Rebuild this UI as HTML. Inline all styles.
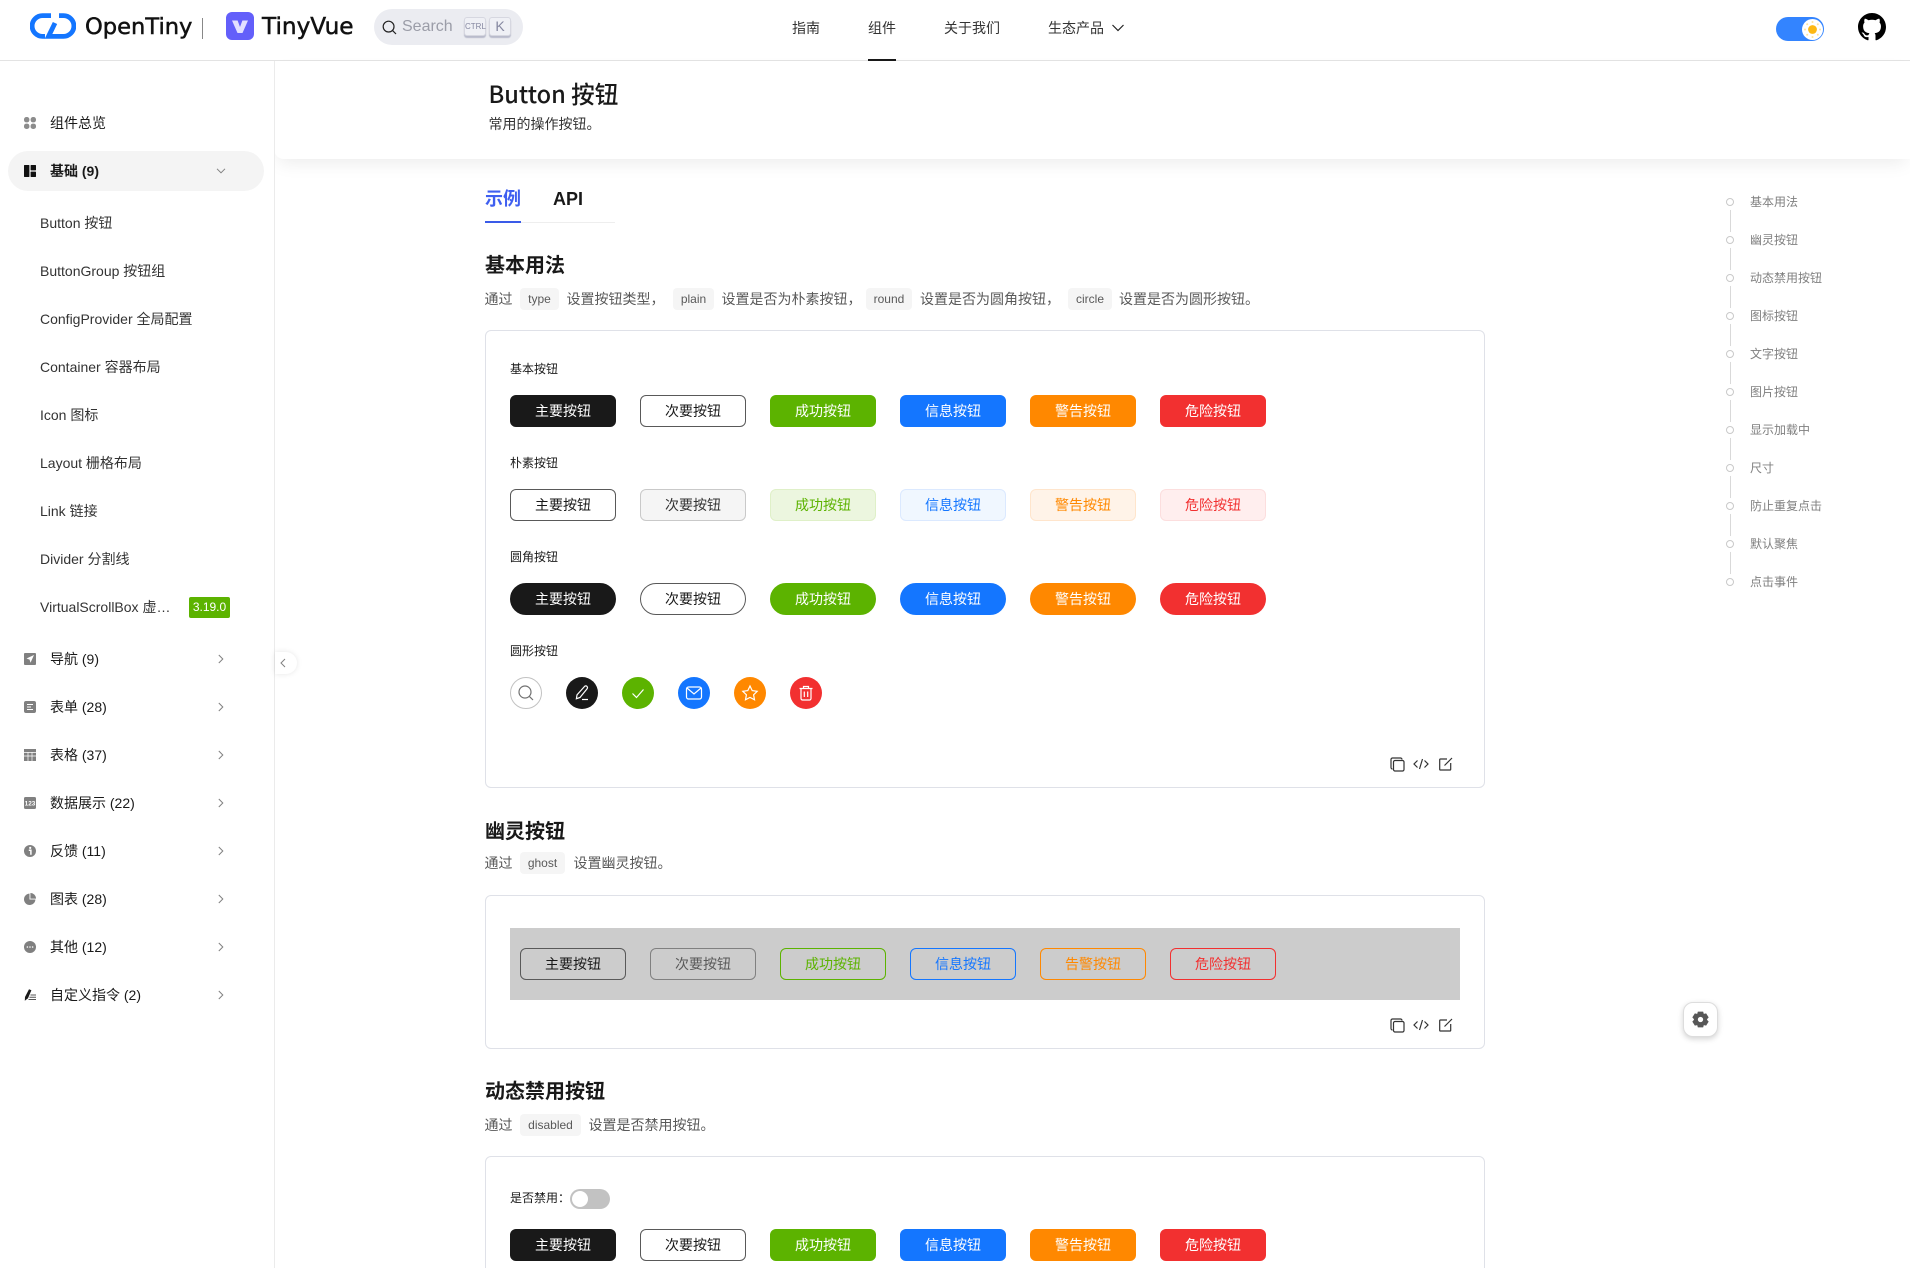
<!DOCTYPE html>
<html lang="zh-CN"><head><meta charset="utf-8"><title>Button 按钮</title>
<style>
html,body{margin:0;padding:0;background:#fff}
#p{position:relative;width:1910px;height:1268px;overflow:hidden;background:#fff;font-family:"Liberation Sans","Noto Sans CJK SC",sans-serif;font-size:14px;color:#191919}
.a,.t,svg.a{position:absolute}
.t{line-height:20px;height:20px;white-space:nowrap}
.n{left:50px;color:#191919}
.s{left:40px;color:#333}
.ch{position:absolute;left:218px;width:6px;height:10px}
.ic{position:absolute;left:24px;width:12px;height:12px}
.h2{position:absolute;left:485px;font-weight:bold;font-size:20px;line-height:28px;height:28px;white-space:nowrap}
.d{color:#595959;top:0}
.c{position:absolute;height:22px;line-height:22px;background:#f5f5f5;border-radius:4px;font-size:12px;color:#595959;text-align:center}
.card{position:absolute;left:485px;width:1000px;box-sizing:border-box;border:1px solid #dfe1e8;border-radius:6px}
.l{font-size:12px;color:#191919;left:510px}
.row{position:absolute;left:510px;display:flex;gap:24px}
.b{box-sizing:border-box;width:106px;height:32px;line-height:30px;border-radius:6px;border:1px solid;text-align:center;font-size:14px}
.p{background:#191919;border-color:#191919;color:#fff}
.o{background:#fff;border-color:#595959;color:#191919}
.g{background:#5cb300;border-color:#5cb300;color:#fff}
.i{background:#1476ff;border-color:#1476ff;color:#fff}
.w{background:#ff8800;border-color:#ff8800;color:#fff}
.x{background:#f23030;border-color:#f23030;color:#fff}
.r .b{border-radius:16px}
.circ{position:absolute;top:677px;width:32px;height:32px;border-radius:50%;box-sizing:border-box}
.circ svg{position:absolute;left:7px;top:7px;width:18px;height:18px;fill:none;stroke:#fff;stroke-width:1.2}
.tool{position:absolute;fill:none;stroke:#333;stroke-width:1.2}
.toc{font-size:12px;color:#808080;left:1750px}
.dot{position:absolute;left:1726px;width:8px;height:8px;box-sizing:border-box;border:1px solid #c9c9c9;border-radius:50%;background:#fff;box-shadow:0 0 0 4px #fff}
</style></head><body><div id="p">

<!-- header -->
<div class="a" style="left:0;top:60px;width:1910px;height:1px;background:#e3e3e3"></div>
<svg class="a" style="left:30px;top:13px" width="46" height="26" viewBox="0 0 46 26" fill="none" stroke="#1476ff" stroke-width="4.8"><path d="M21 2.600H12.500A10.400 10.400 0 0 0 12.500 23.400H15"/><path d="M29 2.600H33.500A10.400 10.400 0 0 1 33.500 23.400H18.500L25 10"/></svg>
<div class="t" style="left:85px;top:11px;height:32px;line-height:32px;font-family:'DejaVu Sans',sans-serif;font-size:22.6px;color:#111;-webkit-text-stroke:.5px #111">OpenTiny</div>
<div class="a" style="left:202px;top:18px;width:1px;height:21px;background:#888"></div>
<svg class="a" style="left:226px;top:12px" width="28" height="28" viewBox="0 0 28 28"><rect width="28" height="28" rx="6" fill="#635ffa"/><path d="M6 8.500h5.600L14 15l2.400-6.500H22L16.500 21h-5z" fill="#e2e0ff"/></svg>
<div class="t" style="left:262px;top:11px;height:32px;line-height:32px;font-family:'DejaVu Sans',sans-serif;font-size:23.2px;color:#111;-webkit-text-stroke:.5px #111">TinyVue</div>

<div class="a" style="left:374px;top:9px;width:149px;height:36px;border-radius:18px;background:#ebecf1"></div>
<svg class="a" style="left:382px;top:20px" width="15" height="15" viewBox="0 0 15 15" fill="none" stroke="#222" stroke-width="1.2"><circle cx="6.600" cy="6.600" r="5.400"/><path d="M10.600 10.600l3.400 3.400"/></svg>
<div class="t" style="left:402px;top:17px;font-size:16px;color:#9b9da8">Search</div>
<div class="a" style="left:464px;top:17px;width:22px;height:19px;box-sizing:border-box;border:1px solid #d6d7e0;border-radius:3px;background:#eff0f5;box-shadow:0 2px 1px #b9bbcb;font-size:8px;line-height:17px;text-align:center;color:#8587a0">CTRL</div>
<div class="a" style="left:489px;top:17px;width:22px;height:19px;box-sizing:border-box;border:1px solid #d6d7e0;border-radius:3px;background:#eff0f5;box-shadow:0 2px 1px #b9bbcb;font-size:14px;line-height:17px;text-align:center;color:#8587a0">K</div>

<div class="t" style="left:792px;top:18px;color:#333">指南</div>
<div class="t" style="left:868px;top:18px;color:#333">组件</div>
<div class="a" style="left:868px;top:59px;width:28px;height:2px;background:#191919"></div>
<div class="t" style="left:944px;top:18px;color:#333">关于我们</div>
<div class="t" style="left:1048px;top:18px;color:#333">生态产品</div>
<svg class="a" style="left:1111px;top:23px" width="14" height="10" viewBox="0 0 14 10" fill="none" stroke="#222" stroke-width="1.2"><path d="M1.500 2L7 7.500 12.500 2"/></svg>

<div class="a" style="left:1776px;top:17px;width:48px;height:24px;border-radius:12px;background:#3384ff"></div>
<div class="a" style="left:1802px;top:19px;width:21px;height:21px;border-radius:50%;background:#fff"></div>
<svg class="a" style="left:1802px;top:19px" width="21" height="21" viewBox="0 0 21 21"><circle cx="10.500" cy="10.500" r="4.400" fill="#fdb813"/><g fill="#fde3a0"><circle cx="10.500" cy="3" r="1"/><circle cx="10.500" cy="18" r="1"/><circle cx="3" cy="10.500" r="1"/><circle cx="18" cy="10.500" r="1"/><circle cx="5.200" cy="5.200" r="1"/><circle cx="15.800" cy="5.200" r="1"/><circle cx="5.200" cy="15.800" r="1"/><circle cx="15.800" cy="15.800" r="1"/></g></svg>
<svg class="a" style="left:1858px;top:13px" width="28" height="28" viewBox="0 0 16 16"><path fill="#000" d="M8 0C3.58 0 0 3.58 0 8c0 3.54 2.29 6.53 5.47 7.59.4.07.55-.17.55-.38 0-.19-.01-.82-.01-1.49-2.01.37-2.53-.49-2.69-.94-.09-.23-.48-.94-.82-1.13-.28-.15-.68-.52-.01-.53.63-.01 1.08.58 1.23.82.72 1.21 1.87.87 2.33.66.07-.52.28-.87.51-1.07-1.78-.2-3.64-.89-3.64-3.95 0-.87.31-1.59.82-2.15-.08-.2-.36-1.02.08-2.12 0 0 .67-.21 2.2.82.64-.18 1.32-.27 2-.27.68 0 1.36.09 2 .27 1.53-1.04 2.2-.82 2.2-.82.44 1.1.16 1.92.08 2.12.51.56.82 1.27.82 2.15 0 3.07-1.87 3.75-3.65 3.95.29.25.54.73.54 1.48 0 1.07-.01 1.93-.01 2.2 0 .21.15.46.55.38A8.013 8.013 0 0016 8c0-4.42-3.58-8-8-8z"/></svg>

<!-- title band -->
<div class="a" style="left:274px;top:61px;width:1636px;height:98px;background:#fff;box-shadow:0 8px 18px -4px rgba(0,0,0,.08);border-radius:0 0 0 10px"></div>
<div class="t" style="left:488.5px;top:77px;height:32px;line-height:32px;font-family:'Noto Sans CJK SC',sans-serif;font-size:23.6px;font-weight:500;color:#191919">Button 按钮</div>
<div class="t" style="left:488.5px;top:114px;color:#333">常用的操作按钮。</div>

<!-- sidebar -->
<div class="a" style="left:0;top:61px;width:274px;height:1207px;background:#fff;border-right:1px solid #ebebeb"></div>
<svg class="ic" style="top:117px" viewBox="0 0 12 12" fill="#8c8c8c"><rect x="0" y="0" width="5.400" height="5.400" rx="2.400"/><rect x="6.600" y="0" width="5.400" height="5.400" rx="2.400"/><rect x="0" y="6.600" width="5.400" height="5.400" rx="2.400"/><rect x="6.600" y="6.600" width="5.400" height="5.400" rx="2.400"/></svg>
<div class="t n" style="top:113px">组件总览</div>
<div class="a" style="left:8px;top:151px;width:256px;height:40px;border-radius:20px;background:#f4f4f4"></div>
<svg class="ic" style="top:165px" viewBox="0 0 12 12" fill="#111"><rect width="5.400" height="12" rx=".6"/><rect x="6.600" width="5.400" height="5.400" rx=".6"/><rect x="6.600" y="6.600" width="5.400" height="5.400" rx=".6"/></svg>
<div class="t n" style="top:161px;font-weight:bold">基础 (9)</div>
<svg class="a" style="left:216px;top:168px" width="10" height="6" viewBox="0 0 10 6" fill="none" stroke="#808080"><path d="M1 .8l4 4 4-4"/></svg>

<div class="t s" style="top:213px">Button 按钮</div>
<div class="t s" style="top:261px">ButtonGroup 按钮组</div>
<div class="t s" style="top:309px">ConfigProvider 全局配置</div>
<div class="t s" style="top:357px">Container 容器布局</div>
<div class="t s" style="top:405px">Icon 图标</div>
<div class="t s" style="top:453px">Layout 栅格布局</div>
<div class="t s" style="top:501px">Link 链接</div>
<div class="t s" style="top:549px">Divider 分割线</div>
<div class="t s" style="top:597px">VirtualScrollBox 虚…</div>
<div class="a" style="left:189px;top:597px;width:41px;height:21px;background:#5cb300;border-radius:2px;color:#fff;font-size:12px;line-height:21px;text-align:center">3.19.0</div>

<svg class="ic" style="top:653px" viewBox="0 0 12 12"><rect width="12" height="12" rx="1" fill="#808080"/><path d="M10 2L2.500 5.500 5.600 6.600 6.500 9.800z" fill="#fff"/></svg>
<div class="t n" style="top:649px">导航 (9)</div>
<svg class="ic" style="top:701px" viewBox="0 0 12 12"><rect width="12" height="12" rx="2" fill="#808080"/><path d="M3 3.500h6M3 6h4M3 8.500h6" stroke="#fff" stroke-width="1"/></svg>
<div class="t n" style="top:697px">表单 (28)</div>
<svg class="ic" style="top:749px" viewBox="0 0 12 12"><rect width="12" height="12" fill="#808080"/><path d="M0 3.500h12M0 7h12M4 3v9M8 3v9" stroke="#fff" stroke-width=".7"/></svg>
<div class="t n" style="top:745px">表格 (37)</div>
<svg class="ic" style="top:797px" viewBox="0 0 12 12"><rect width="12" height="12" rx="1.500" fill="#808080"/><text x="6" y="8.400" font-size="6.400" font-family="Liberation Sans" font-weight="bold" fill="#fff" text-anchor="middle">123</text></svg>
<div class="t n" style="top:793px">数据展示 (22)</div>
<svg class="ic" style="top:845px" viewBox="0 0 12 12"><circle cx="6" cy="6" r="6" fill="#808080"/><circle cx="6.200" cy="2.900" r="1.100" fill="#fff"/><path d="M4.800 5.300h2.100V9.700" fill="none" stroke="#fff" stroke-width="1.500"/></svg>
<div class="t n" style="top:841px">反馈 (11)</div>
<svg class="ic" style="top:893px" viewBox="0 0 12 12"><path d="M5.500 .6A5.700 5.700 0 1 0 11.400 6.500H5.500z" fill="#808080"/><path d="M6.400 0A5.700 5.700 0 0 1 12 5.600H6.400z" fill="#808080"/></svg>
<div class="t n" style="top:889px">图表 (28)</div>
<svg class="ic" style="top:941px" viewBox="0 0 12 12"><circle cx="6" cy="6" r="6" fill="#808080"/><g fill="#fff"><circle cx="3.400" cy="6" r=".8"/><circle cx="6" cy="6" r=".8"/><circle cx="8.600" cy="6" r=".8"/></g></svg>
<div class="t n" style="top:937px">其他 (12)</div>
<svg class="ic" style="top:989px" viewBox="0 0 12 12"><path d="M5 .3l2.400 1L4 9.200 .8 11.700 1 8z" fill="#1a1a1a"/><path d="M6.500 6h5.500M5.500 8.300h6.500M4.500 10.500h7.500" stroke="#555" stroke-width="1"/></svg>
<div class="t n" style="top:985px">自定义指令 (2)</div>

<svg class="ch" style="top:654px" viewBox="0 0 6 10" fill="none" stroke="#808080"><path d="M.8 1l4 4-4 4"/></svg>
<svg class="ch" style="top:702px" viewBox="0 0 6 10" fill="none" stroke="#808080"><path d="M.8 1l4 4-4 4"/></svg>
<svg class="ch" style="top:750px" viewBox="0 0 6 10" fill="none" stroke="#808080"><path d="M.8 1l4 4-4 4"/></svg>
<svg class="ch" style="top:798px" viewBox="0 0 6 10" fill="none" stroke="#808080"><path d="M.8 1l4 4-4 4"/></svg>
<svg class="ch" style="top:846px" viewBox="0 0 6 10" fill="none" stroke="#808080"><path d="M.8 1l4 4-4 4"/></svg>
<svg class="ch" style="top:894px" viewBox="0 0 6 10" fill="none" stroke="#808080"><path d="M.8 1l4 4-4 4"/></svg>
<svg class="ch" style="top:942px" viewBox="0 0 6 10" fill="none" stroke="#808080"><path d="M.8 1l4 4-4 4"/></svg>
<svg class="ch" style="top:990px" viewBox="0 0 6 10" fill="none" stroke="#808080"><path d="M.8 1l4 4-4 4"/></svg>

<div class="a" style="left:275px;top:652px;width:22px;height:22px;background:#fff;border-radius:0 11px 11px 0;box-shadow:0 0 6px rgba(0,0,0,.1)"></div>
<svg class="a" style="left:280px;top:658px" width="6" height="10" viewBox="0 0 6 10" fill="none" stroke="#808080"><path d="M5 1L1 5l4 4"/></svg>

<!-- tabs -->
<div class="t" style="left:485px;top:187px;height:24px;line-height:24px;font-size:18px;font-weight:bold;color:#3f5ff0">示例</div>
<div class="t" style="left:553px;top:187px;height:24px;line-height:24px;font-size:18px;font-weight:bold">API</div>
<div class="a" style="left:485px;top:222px;width:130px;height:1px;background:#eee"></div>
<div class="a" style="left:485px;top:221px;width:36px;height:2px;background:#3a5be8"></div>

<!-- section 1 -->
<div class="h2" style="top:252px">基本用法</div>
<div class="t d" style="left:484.5px;top:288.500px">通过</div>
<div class="c" style="left:520px;top:288px;width:39px">type</div>
<div class="t d" style="left:566.500px;top:288.500px">设置按钮类型，</div>
<div class="c" style="left:673px;top:288px;width:41px">plain</div>
<div class="t d" style="left:721.500px;top:288.500px">设置是否为朴素按钮，</div>
<div class="c" style="left:866px;top:288px;width:46px">round</div>
<div class="t d" style="left:920px;top:288.500px">设置是否为圆角按钮，</div>
<div class="c" style="left:1068px;top:288px;width:44px">circle</div>
<div class="t d" style="left:1119px;top:288.500px">设置是否为圆形按钮。</div>

<div class="card" style="top:330px;height:458px"></div>
<div class="t l" style="top:359px">基本按钮</div>
<div class="row" style="top:395px"><div class="b p">主要按钮</div><div class="b o">次要按钮</div><div class="b g">成功按钮</div><div class="b i">信息按钮</div><div class="b w">警告按钮</div><div class="b x">危险按钮</div></div>
<div class="t l" style="top:453px">朴素按钮</div>
<div class="row" style="top:489px"><div class="b o">主要按钮</div><div class="b" style="background:#f5f5f5;border-color:#c9c9c9;color:#333">次要按钮</div><div class="b" style="background:#ecf6df;border-color:#dff0c8;color:#5cb300">成功按钮</div><div class="b" style="background:#f0f7ff;border-color:#dbe9ff;color:#1476ff">信息按钮</div><div class="b" style="background:#fff3e8;border-color:#ffe5cc;color:#ff8800">警告按钮</div><div class="b" style="background:#ffeeee;border-color:#fcdede;color:#f23030">危险按钮</div></div>
<div class="t l" style="top:547px">圆角按钮</div>
<div class="row r" style="top:583px"><div class="b p">主要按钮</div><div class="b o">次要按钮</div><div class="b g">成功按钮</div><div class="b i">信息按钮</div><div class="b w">警告按钮</div><div class="b x">危险按钮</div></div>
<div class="t l" style="top:641px">圆形按钮</div>

<div class="circ" style="left:510px;border:1px solid #c2c2c2;background:#fff"><svg viewBox="0 0 18 18" style="left:6px;top:6px;stroke:#707070"><circle cx="8" cy="8" r="6"/><path d="M12.400 12.400l3.600 3.600"/></svg></div>
<div class="circ" style="left:566px;background:#191919"><svg viewBox="0 0 18 18"><path d="M11.500 2.500a1.700 1.700 0 0 1 2.600 2.200L7 13.500l-3.600 1.200.6-3.800z"/><path d="M9 15.500h6"/></svg></div>
<div class="circ" style="left:622px;background:#5cb300"><svg viewBox="0 0 18 18"><path d="M3.500 9.500l4 4 7-8"/></svg></div>
<div class="circ" style="left:678px;background:#1476ff"><svg viewBox="0 0 18 18"><rect x="1.500" y="3" width="15" height="12" rx="2"/><path d="M2 4l7 6 7-6"/></svg></div>
<div class="circ" style="left:734px;background:#ff8800"><svg viewBox="0 0 18 18"><path d="M9 2l2.200 4.600 5 .7-3.600 3.500.9 5L9 13.400 4.500 15.800l.9-5L1.800 7.300l5-.7z"/></svg></div>
<div class="circ" style="left:790px;background:#f23030"><svg viewBox="0 0 18 18"><path d="M2.500 4.500h13M6.500 4.500V2.500h5v2M4 4.500v10a1.500 1.500 0 0 0 1.500 1.500h7a1.500 1.500 0 0 0 1.500-1.500v-10M7.300 7.500v5.500M10.700 7.500v5.500"/></svg></div>

<svg class="tool" style="left:1390px;top:757px" width="15" height="15" viewBox="0 0 15 15"><path d="M2.500 12A1.500 1.500 0 0 1 1 10.500V2.500A1.500 1.500 0 0 1 2.500 1h8A1.500 1.500 0 0 1 12 2.500"/><rect x="3.500" y="3.500" width="10.500" height="10.500" rx="1.500"/></svg>
<svg class="tool" style="left:1413px;top:758px" width="16" height="12" viewBox="0 0 16 12"><path d="M4.500 2.500L1 6l3.500 3.500M11.500 2.500L15 6l-3.500 3.500M9.500 1L6.500 11"/></svg>
<svg class="tool" style="left:1439px;top:757px" width="14" height="14" viewBox="0 0 14 14"><path d="M8 2H1.500A.8.8 0 0 0 .7 2.800V12.200A.8.8 0 0 0 1.500 13H10.900A.8.800 0 0 0 11.700 12.200V6M5.500 8.500L13 1"/></svg>

<!-- section 2 -->
<div class="h2" style="top:818px">幽灵按钮</div>
<div class="t d" style="left:484.500px;top:853px">通过</div>
<div class="c" style="left:520px;top:852px;width:45px">ghost</div>
<div class="t d" style="left:573.500px;top:853px">设置幽灵按钮。</div>
<div class="card" style="top:895px;height:154px"></div>
<div class="a" style="left:510px;top:928px;width:950px;height:72px;background:#ccc"></div>
<div class="row" style="left:520px;top:948px"><div class="b" style="border-color:#595959;color:#191919">主要按钮</div><div class="b" style="border-color:#808080;color:#595959">次要按钮</div><div class="b" style="border-color:#5cb300;color:#5cb300">成功按钮</div><div class="b" style="border-color:#1476ff;color:#1476ff">信息按钮</div><div class="b" style="border-color:#ff8800;color:#ff8800">告警按钮</div><div class="b" style="border-color:#f23030;color:#f23030">危险按钮</div></div>
<svg class="tool" style="left:1390px;top:1018px" width="15" height="15" viewBox="0 0 15 15"><path d="M2.500 12A1.500 1.500 0 0 1 1 10.500V2.500A1.500 1.500 0 0 1 2.500 1h8A1.500 1.500 0 0 1 12 2.500"/><rect x="3.500" y="3.500" width="10.500" height="10.500" rx="1.500"/></svg>
<svg class="tool" style="left:1413px;top:1019px" width="16" height="12" viewBox="0 0 16 12"><path d="M4.500 2.500L1 6l3.500 3.500M11.500 2.500L15 6l-3.500 3.500M9.500 1L6.500 11"/></svg>
<svg class="tool" style="left:1439px;top:1018px" width="14" height="14" viewBox="0 0 14 14"><path d="M8 2H1.500A.8.8 0 0 0 .7 2.800V12.200A.8.8 0 0 0 1.500 13H10.900A.8.800 0 0 0 11.700 12.200V6M5.500 8.500L13 1"/></svg>

<!-- section 3 -->
<div class="h2" style="top:1078px">动态禁用按钮</div>
<div class="t d" style="left:484.500px;top:1115px">通过</div>
<div class="c" style="left:520px;top:1114px;width:61px">disabled</div>
<div class="t d" style="left:588.500px;top:1115px">设置是否禁用按钮。</div>
<div class="card" style="top:1156px;height:140px"></div>
<div class="t l" style="top:1188px">是否禁用：</div>
<div class="a" style="left:570px;top:1189px;width:40px;height:20px;border-radius:10px;background:#c2c2c2"></div>
<div class="a" style="left:572px;top:1191px;width:16px;height:16px;border-radius:50%;background:#fff"></div>
<div class="row" style="top:1229px"><div class="b p">主要按钮</div><div class="b o">次要按钮</div><div class="b g">成功按钮</div><div class="b i">信息按钮</div><div class="b w">警告按钮</div><div class="b x">危险按钮</div></div>

<!-- toc -->
<div class="a" style="left:1730px;top:202px;width:1px;height:380px;background:#d9d9d9"></div>
<div class="dot" style="top:198px"></div><div class="t toc" style="top:192px">基本用法</div>
<div class="dot" style="top:236px"></div><div class="t toc" style="top:230px">幽灵按钮</div>
<div class="dot" style="top:274px"></div><div class="t toc" style="top:268px">动态禁用按钮</div>
<div class="dot" style="top:312px"></div><div class="t toc" style="top:306px">图标按钮</div>
<div class="dot" style="top:350px"></div><div class="t toc" style="top:344px">文字按钮</div>
<div class="dot" style="top:388px"></div><div class="t toc" style="top:382px">图片按钮</div>
<div class="dot" style="top:426px"></div><div class="t toc" style="top:420px">显示加载中</div>
<div class="dot" style="top:464px"></div><div class="t toc" style="top:458px">尺寸</div>
<div class="dot" style="top:502px"></div><div class="t toc" style="top:496px">防止重复点击</div>
<div class="dot" style="top:540px"></div><div class="t toc" style="top:534px">默认聚焦</div>
<div class="dot" style="top:578px"></div><div class="t toc" style="top:572px">点击事件</div>

<!-- settings -->
<div class="a" style="left:1683px;top:1002px;width:35px;height:35px;box-sizing:border-box;background:#fff;border:1px solid #ddd;border-radius:10px;box-shadow:0 2px 6px rgba(0,0,0,.18)"></div>
<svg class="a" style="left:1691.500px;top:1010.500px" width="17" height="17" viewBox="0 0 16 16"><path fill-rule="evenodd" fill="#575757" d="M5.500.6h5l.6 2.100 2.200-.5 2.400 3.800-1.500 1.600v.8l1.500 1.600-2.400 3.800-2.200-.5-.6 2.100h-5l-.6-2.100-2.200.5L.3 10l1.500-1.600v-.8L.3 6l2.400-3.800 2.200.5zM8 5.500a2.500 2.500 0 1 0 0 5 2.500 2.500 0 0 0 0-5z"/></svg>

</div></body></html>
